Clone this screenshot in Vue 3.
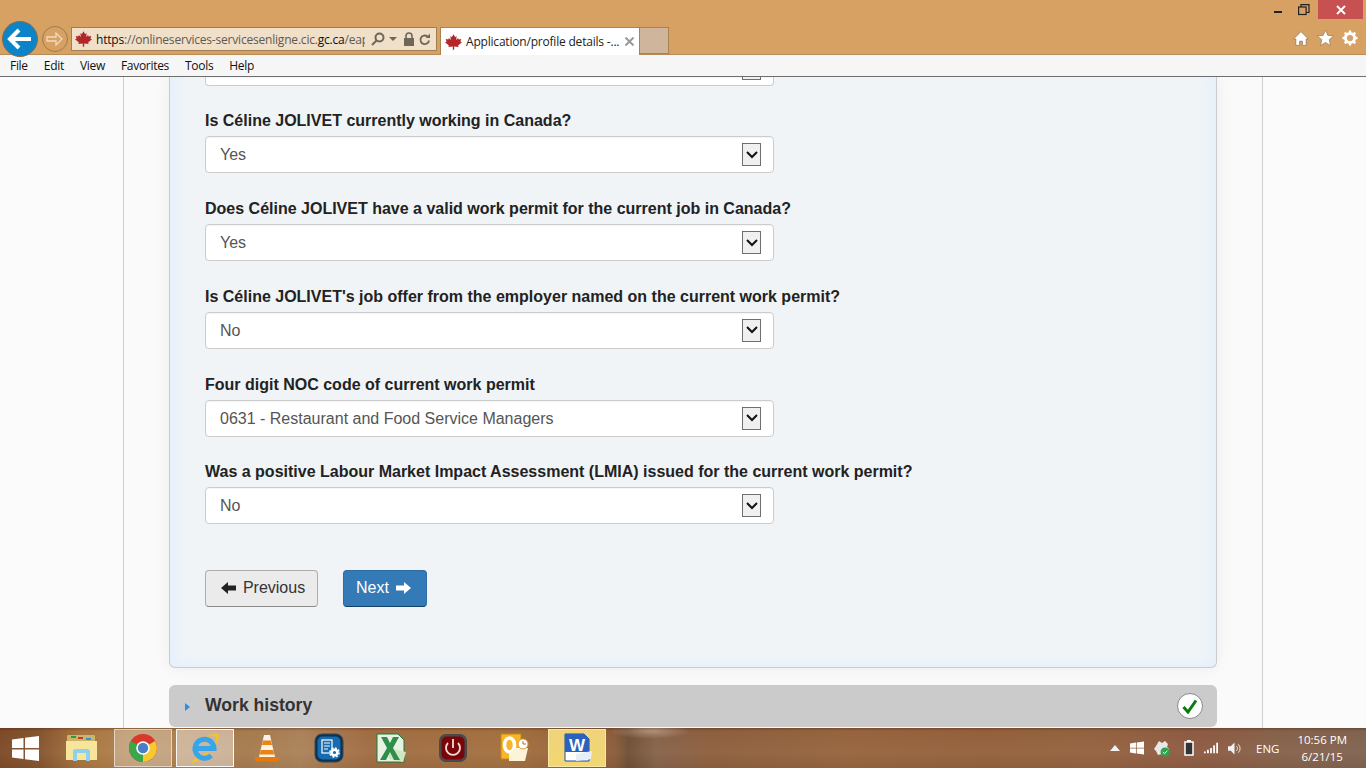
<script setup>
const menus = ['File', 'Edit', 'View', 'Favorites', 'Tools', 'Help']
const questions = [
  { label: 'Is Céline JOLIVET currently working in Canada?', value: 'Yes' },
  { label: 'Does Céline JOLIVET have a valid work permit for the current job in Canada?', value: 'Yes' },
  { label: "Is Céline JOLIVET's job offer from the employer named on the current work permit?", value: 'No' },
  { label: 'Four digit NOC code of current work permit', value: '0631 - Restaurant and Food Service Managers' },
  { label: 'Was a positive Labour Market Impact Assessment (LMIA) issued for the current work permit?', value: 'No' },
]
const leaf = 'M12 0l2.200 4 2.300-1.200-.8 5.200 2.800-2.800.8 2.100 3.700-.6-1.200 3.800L24 11.500 18.500 16l.8 2-6.300-.8V22h-2v-4.800L4.700 18l.8-2L0 11.500l2.200-1L1 6.700l3.700.6.8-2.100L8.300 8l-.8-5.200L9.800 4z'
</script>

<template>
  <div class="screen">
    <header class="chrome">
      <div class="caption">
        <svg class="cap-icon min" width="12" height="12" viewBox="0 0 12 12"><rect x="0" y="7" width="8" height="2" fill="#222"/></svg>
        <svg class="cap-icon" width="12" height="12" viewBox="0 0 12 12" fill="none" stroke="#222" stroke-width="1.2"><rect x=".6" y="3" width="7.500" height="7.500"/><path d="M3 3V.6h8v7.900H8"/></svg>
        <div class="close">
          <svg width="10" height="10" viewBox="0 0 10 10" stroke="#fff" stroke-width="2"><path d="M1 1l8 8M9 1l-8 8"/></svg>
        </div>
      </div>
      <div class="navrow">
        <div class="back">
          <svg width="28" height="24" viewBox="0 0 28 24" fill="none" stroke="#fff" stroke-width="4"><path d="M25 12H5M13 3l-9 9 9 9"/></svg>
        </div>
        <div class="forward">
          <svg width="18" height="16" viewBox="0 0 18 16" fill="none" stroke="#efdcc0" stroke-width="1.300"><path d="M1 6h9V2l6 6-6 6v-4H1z"/></svg>
        </div>
        <div class="address">
          <svg class="leaf" width="17" height="16" viewBox="0 0 24 22"><path :d="leaf" fill="#b3262a"/></svg>
          <div class="url"><span class="dark">https</span>://onlineservices-servicesenligne.cic.<span class="dark">gc.ca</span>/eap</div>
          <svg class="mag" width="14" height="14" viewBox="0 0 14 14" fill="none" stroke="#6f6558" stroke-width="2"><circle cx="8.500" cy="5.500" r="4"/><path d="M5.500 8.500L1 13"/></svg>
          <svg class="drop" width="8" height="5" viewBox="0 0 8 5"><path d="M0 0h8L4 4z" fill="#6f6558"/></svg>
          <svg class="lock" width="12" height="14" viewBox="0 0 12 14"><rect x="1" y="6" width="10" height="8" fill="#6f6558"/><path d="M3 6V4a3 3 0 016 0v2" fill="none" stroke="#6f6558" stroke-width="1.600"/></svg>
          <svg width="12" height="13" viewBox="0 0 12 13" fill="none" stroke="#6f6558" stroke-width="1.800"><path d="M10 7.500a4.300 4.300 0 11-1.500-4"/><path d="M11 .5v4.400H6.800z" fill="#6f6558" stroke="none"/></svg>
        </div>
        <div class="tab">
          <svg class="leaf" width="17" height="16" viewBox="0 0 24 22"><path :d="leaf" fill="#b3262a"/></svg>
          <span class="tab-title">Application/profile details -...</span>
          <svg width="9" height="9" viewBox="0 0 9 9" stroke="#9a9a9a" stroke-width="2"><path d="M.5.5l8 8M8.500.5l-8 8"/></svg>
        </div>
        <div class="newtab"></div>
        <div class="tools">
          <svg width="16" height="15" viewBox="0 0 16 15"><path d="M8 .6L.6 8h2.200v6.400h3.800v-4.200h2.800v4.200h3.800V8h2.200z" fill="#fff" stroke="#8a6f52" stroke-width=".7"/></svg>
          <svg width="17" height="16" viewBox="0 0 17 16"><path d="M8.500 0l2.300 5.400 5.700.5-4.300 3.800 1.300 5.800-5-3-5 3 1.300-5.800L.5 5.900l5.700-.5z" fill="#fff" stroke="#8a6f52" stroke-width=".6"/></svg>
          <svg width="16" height="16" viewBox="0 0 16 16"><circle cx="8" cy="8" r="4.600" fill="none" stroke="#fff" stroke-width="3"/><path d="M8 .5v3M8 12.500v3M.5 8h3M12.500 8h3M2.700 2.700l2.100 2.100M11.200 11.200l2.100 2.100M13.300 2.700l-2.100 2.100M4.800 11.200l-2.100 2.100" stroke="#fff" stroke-width="2.400"/></svg>
        </div>
      </div>
    </header>

    <nav class="menubar">
      <span v-for="m in menus" :key="m" class="menu-item">{{ m }}</span>
    </nav>

    <main class="viewport">
      <div class="container">
        <section class="panel">
          <div class="select cut">
            <span class="arrow"></span>
          </div>
          <div v-for="q in questions" :key="q.label" class="field">
            <label class="field-label">{{ q.label }}</label>
            <div class="select">
              <span class="value">{{ q.value }}</span>
              <span class="arrow">
                <svg width="12" height="8" viewBox="0 0 12 8" fill="none" stroke="#111" stroke-width="2"><path d="M1 1l5 5 5-5"/></svg>
              </span>
            </div>
          </div>
          <div class="actions">
            <button class="btn btn-prev">
              <svg width="15" height="12" viewBox="0 0 15 12"><path d="M0 6l7-6v3.500h8v5H7V12z" fill="#222"/></svg>
              Previous
            </button>
            <button class="btn btn-next">
              Next
              <svg width="15" height="12" viewBox="0 0 15 12"><path d="M15 6L8 0v3.500H0v5h8V12z" fill="#fff"/></svg>
            </button>
          </div>
        </section>
        <div class="accordion">
          <svg class="caret" width="5" height="8" viewBox="0 0 5 8"><path d="M0 0l5 4-5 4z" fill="#2f8de0"/></svg>
          <h2 class="acc-title">Work history</h2>
          <span class="check">
            <svg width="16" height="15" viewBox="0 0 16 15" fill="none" stroke="#0a7a12" stroke-width="3"><path d="M1.500 8l4.500 5 8-11.500"/></svg>
          </span>
        </div>
      </div>
    </main>

    <footer class="taskbar">
      <div class="tb-slot start">
        <svg width="27" height="25" viewBox="0 0 27 25" fill="#fff"><path d="M0 3.600L11.500 2v10H0zM13 1.800L27 0v12H13zM0 13.500h11.500V23L0 21.400zM13 13.500h14V25l-14-1.800z"/></svg>
      </div>
      <div class="tb-slot explorer">
        <svg width="34" height="32" viewBox="0 0 34 32"><rect x="2" y="3" width="28" height="8" rx="1" fill="#c9b66a"/><rect x="6" y="4" width="5" height="2" fill="#2b9d3a"/><rect x="13" y="5" width="5" height="2" fill="#c93b30"/><rect x="21" y="6" width="5" height="2" fill="#3a8fd6"/><path d="M1 9h31v19H1z" fill="#f7e59b"/><path d="M8 29v-9a3 3 0 013-3h11a3 3 0 013 3v9h-4v-8h-9v8z" fill="#8fd0ef"/></svg>
      </div>
      <div class="tb-slot running">
        <svg width="30" height="30" viewBox="0 0 30 30"><circle cx="15" cy="15" r="14" fill="#d8392c"/><path d="M15 15L27.100 8A14 14 0 0115 29z" fill="#f5c92f"/><path d="M15 15L15 29A14 14 0 012.900 8z" fill="#3aa748"/><circle cx="15" cy="15" r="6.800" fill="#fff"/><circle cx="15" cy="15" r="5.200" fill="#4a7fc8"/></svg>
      </div>
      <div class="tb-slot running active">
        <svg width="32" height="32" viewBox="0 0 32 32"><path d="M8 24.500C2 30 1 32 4 31c5-1.500 13-7 19-14C29 10 32 4 29 2c-2.500-1.500-8 0-13 4 6-2.500 10.500-3 11-1 .8 3-3 9-8 14-5 4.500-8 6.500-11 5.500z" fill="#f2c230"/><path d="M7 16.500h18a9.500 9.500 0 10-2.800 7" fill="none" stroke="#37a5e8" stroke-width="5"/></svg>
      </div>
      <div class="tb-slot">
        <svg width="26" height="30" viewBox="0 0 26 30"><path d="M10 2h6l2 9 3 13H5l3-13z" fill="#f7f3ec"/><path d="M9 7.500h8l1 4.500H8zM6.700 17h12.600l1 4.500H5.700z" fill="#ee8310"/><path d="M0 24h26l-2 4.500H2z" fill="#e9780a"/></svg>
      </div>
      <div class="tb-slot">
        <svg width="30" height="30" viewBox="0 0 30 30"><rect x="1" y="1" width="28" height="28" rx="7" fill="#0d3350" stroke="#394650"/><rect x="3.500" y="3.500" width="23" height="23" rx="5" fill="#176bb0"/><rect x="8" y="7" width="10" height="13" fill="none" stroke="#fff" stroke-width="1.200"/><path d="M10 10h6M10 13h6M10 16h4" stroke="#fff"/><circle cx="20.500" cy="19.500" r="2.800" fill="none" stroke="#fff" stroke-width="2.400"/><circle cx="20.500" cy="19.500" r="4.500" fill="none" stroke="#fff" stroke-width="1.600" stroke-dasharray="2 1.500"/></svg>
      </div>
      <div class="tb-slot">
        <svg width="30" height="30" viewBox="0 0 30 30"><path d="M1 1h21l6 6v22H1z" fill="#e8f2e2" stroke="#1d7a3a"/><path d="M13 15l17 4-3 10-14-3z" fill="#cfe6c5"/><path d="M5 4h6l3 6 3-6h6l-6 11 7 12h-6l-4-8-4 8H4l7-12z" fill="#2f8f4a"/></svg>
      </div>
      <div class="tb-slot">
        <svg width="30" height="30" viewBox="0 0 30 30"><rect x="1" y="1" width="28" height="28" rx="7" fill="#4a4a4a"/><rect x="3.500" y="3.500" width="23" height="23" rx="5" fill="#7a0508"/><path d="M10 10a7 7 0 1010 0" fill="none" stroke="#f3dede" stroke-width="1.800"/><path d="M15 6v9" stroke="#f3dede" stroke-width="1.800"/></svg>
      </div>
      <div class="tb-slot">
        <svg width="30" height="30" viewBox="0 0 30 30"><path d="M1 1h20v25H1z" fill="#f5b62a" stroke="#c88712"/><ellipse cx="9.500" cy="12" rx="5" ry="7" fill="none" stroke="#fff" stroke-width="3.500"/><path d="M9 21l6-6h13l-3 13H9z" fill="#fdf3d8"/><circle cx="23" cy="11" r="5" fill="#fff" stroke="#e59a2a"/><path d="M23 8v3h3" fill="none" stroke="#c46a20"/></svg>
      </div>
      <div class="tb-slot word">
        <svg width="30" height="30" viewBox="0 0 30 30"><path d="M3 1h19l5 5v22H3z" fill="#fff" stroke="#1c4f9e"/><path d="M3 1h19l5 5v13H3z" fill="#2a62bd"/><text x="15" y="18" text-anchor="middle" class="word-w">W</text><path d="M14 21l16-3-1 8-15 2z" fill="#e8eef8"/></svg>
      </div>

      <div class="tray">
        <svg width="10" height="6" viewBox="0 0 10 6"><path d="M5 0l5 6H0z" fill="#f2f2f2"/></svg>
        <svg width="14" height="14" viewBox="0 0 27 25" fill="#fff"><path d="M0 3.600L11.500 2v10H0zM13 1.800L27 0v12H13zM0 13.500h11.500V23L0 21.400zM13 13.500h14V25l-14-1.800z"/></svg>
        <svg width="16" height="17" viewBox="0 0 16 17"><path d="M5 1l3 2 3-2 3 3-1 3 2 2-3 3-1 3-3-1-4 1-2-4-2-2 2-3z" fill="#e8e8e8"/><circle cx="11" cy="12" r="4.500" fill="#2da34a"/><path d="M8.800 12l1.700 1.700 2.800-3" fill="none" stroke="#fff"/></svg>
        <svg class="battery" width="10" height="16" viewBox="0 0 10 16"><rect x="1" y="2" width="8" height="13" fill="#333" stroke="#fff" stroke-width="1.500"/><rect x="3" y="0" width="4" height="2" fill="#fff"/></svg>
        <svg width="14" height="12" viewBox="0 0 16 12" fill="#fff"><rect y="10" width="2" height="2"/><rect x="3.500" y="8" width="2" height="4"/><rect x="7" y="6" width="2" height="6"/><rect x="10.500" y="3" width="2" height="9"/><rect x="14" y="0" width="2" height="12"/></svg>
        <svg width="13" height="13" viewBox="0 0 14 13"><path d="M0 4h3l4-4v13l-4-4H0z" fill="#f2f2f2"/><path d="M9 4a3 3 0 010 5M11 2a6 6 0 010 9" fill="none" stroke="#f2f2f2"/></svg>
        <span class="lang">ENG</span>
        <div class="clock"><span>10:56 PM</span><span>6/21/15</span></div>
      </div>
    </footer>
  </div>
</template>

<style>
html, body { margin: 0; overflow: hidden; }
</style>

<style scoped>
.screen {
  width: 1366px;
  height: 768px;
  display: flex;
  flex-direction: column;
  overflow: hidden;
  font-family: "Liberation Sans", Arial, sans-serif;
}
.chrome {
  height: 55px;
  flex: none;
  background: #d6a162;
  border-bottom: 1px solid #b98c57;
  box-sizing: border-box;
  display: flex;
  flex-direction: column;
}
.caption {
  height: 19px;
  display: flex;
  justify-content: flex-end;
  align-items: flex-start;
  flex: none;
  padding-right: 3px;
}
.cap-icon { margin-top: 4px; margin-right: 8px; }
.min { margin-right: 12px; }
.close {
  width: 45px;
  height: 19px;
  background: #c75050;
  display: flex;
  align-items: center;
  justify-content: center;
}
.navrow {
  flex: 1;
  display: flex;
  align-items: flex-start;
  padding-left: 2px;
  position: relative;
}
.back {
  width: 36px;
  height: 36px;
  margin-top: 2px;
  border-radius: 50%;
  background: #0b85c8;
  border: 1px solid #8b6a44;
  box-sizing: border-box;
  display: flex;
  align-items: center;
  justify-content: center;
}
.forward {
  width: 26px;
  height: 26px;
  margin: 7px 0 0 4px;
  border-radius: 50%;
  border: 1px solid #a27a4a;
  box-sizing: border-box;
  display: flex;
  align-items: center;
  justify-content: center;
}
.address {
  width: 366px;
  height: 24px;
  margin: 8px 0 0 3px;
  background: #f0dfc9;
  border: 1px solid #a07d52;
  box-sizing: border-box;
  display: flex;
  align-items: center;
  padding: 0 5px 0 3px;
  gap: 3px;
  flex: none;
}
.leaf { flex: none; }
.url {
  width: 269px;
  margin-left: 1px;
  font-family: "Open Sans", sans-serif;
  font-size: 12px;
  color: #5f5a50;
  white-space: nowrap;
  overflow: hidden;
  flex: none;
  letter-spacing: -.2px;
}
.dark { color: #111; }
.mag { margin-left: 3px; }
.drop { margin-left: 1px; }
.lock { margin: 0 1px 0 3px; }
.tab {
  width: 200px;
  height: 28px;
  margin: 8px 0 0 3px;
  background: #fff;
  border: 1px solid #a9834f;
  border-bottom: none;
  box-sizing: border-box;
  display: flex;
  align-items: center;
  padding: 0 5px 0 4px;
  gap: 4px;
  flex: none;
}
.tab-title {
  font-family: "Open Sans", sans-serif;
  font-size: 12px;
  letter-spacing: -.2px;
  color: #222;
  white-space: nowrap;
  width: 155px;
  flex: none;
}
.newtab {
  width: 29px;
  height: 27px;
  margin-top: 8px;
  background: #ceb59b;
  border: 1px solid #a9834f;
  border-left: none;
  box-sizing: border-box;
  flex: none;
}
.tools {
  margin-left: auto;
  display: flex;
  gap: 8px;
  align-items: center;
  padding: 11px 8px 0 0;
}
.menubar {
  height: 22px;
  flex: none;
  background: #f6f6f6;
  border-bottom: 1px solid #6e6e6e;
  box-sizing: border-box;
  display: flex;
  align-items: center;
  padding-left: 10px;
  gap: 16px;
}
.menu-item {
  font-family: "Open Sans", sans-serif;
  font-size: 12px;
  letter-spacing: -.3px;
  color: #111;
}
.viewport {
  flex: 1;
  min-height: 0;
  overflow: hidden;
  background: #fbfbfb;
}
.container {
  width: 1140px;
  margin-left: 123px;
  height: 100%;
  box-sizing: border-box;
  border-left: 1px solid #cfcfcf;
  border-right: 1px solid #cfcfcf;
  padding: 0 45px;
  background: #fafafa;
}
.panel {
  width: 1048px;
  height: 591px;
  box-sizing: border-box;
  background: #f0f4f7;
  border: 1px solid #c9cdd1;
  border-top: none;
  border-radius: 0 0 6px 6px;
  box-shadow: inset 0 -14px 14px -10px #e6f0fb, inset 16px 0 14px -10px #e6f0fb, inset -16px 0 14px -10px #e6f0fb, 0 0 16px rgba(0, 0, 0, .06);
  padding: 0 35px;
}
.field { margin-top: 26.750px; }
.field-label {
  display: block;
  height: 24px;
  font-size: 16px;
  line-height: 18px;
  font-weight: 700;
  color: #222;
  white-space: nowrap;
}
.select {
  width: 569px;
  height: 37px;
  box-sizing: border-box;
  background: #fff;
  border: 1px solid #ccc;
  border-radius: 4px;
  display: flex;
  align-items: center;
  padding-left: 14px;
  padding-right: 12px;
  box-shadow: inset 0 1px 1px rgba(0, 0, 0, .04);
}
.select.cut {
  height: 8.500px;
  border-top: none;
  border-radius: 0 0 4px 4px;
  align-items: flex-start;
}
.select.cut .arrow { height: 3px; border-top: none; }
.value { font-size: 16px; color: #555; margin-top: 1px; }
.arrow {
  margin-left: auto;
  width: 19px;
  height: 23px;
  box-sizing: border-box;
  background: #f0f0f0;
  border: 1px solid #6f6f6f;
  display: flex;
  align-items: center;
  justify-content: center;
}
.actions {
  display: flex;
  gap: 25px;
  margin-top: 45.750px;
}
.btn {
  height: 37px;
  box-sizing: border-box;
  border-radius: 4px;
  font-family: "Liberation Sans", Arial, sans-serif;
  font-size: 16px;
  display: flex;
  align-items: center;
  gap: 7px;
  padding: 0 0 1px;
}
.btn-prev {
  width: 113px;
  background: #ebebeb;
  border: 1px solid #adadad;
  border-bottom-color: #8a8a8a;
  color: #333;
  justify-content: center;
  padding-left: 3px;
}
.btn-next {
  width: 84px;
  background: #337ab7;
  border: 1px solid #2e6da4;
  border-bottom-color: #123f66;
  color: #fff;
  justify-content: center;
  padding-right: 3px;
}
.accordion {
  width: 1048px;
  height: 42px;
  margin-top: 17px;
  box-sizing: border-box;
  background: #cbcbcb;
  border-radius: 6px;
  display: flex;
  align-items: center;
  padding: 0 14px 0 16px;
}
.caret { flex: none; margin-top: 1px; }
.acc-title {
  margin: 0 0 2px 15px;
  font-size: 17.600px;
  font-weight: 700;
  color: #333;
}
.check {
  margin-left: auto;
  width: 26px;
  height: 26px;
  border-radius: 50%;
  background: #fff;
  border: 1px solid #888;
  box-sizing: border-box;
  display: flex;
  align-items: center;
  justify-content: center;
}
.taskbar {
  height: 40px;
  flex: none;
  display: flex;
  align-items: center;
  background:
    radial-gradient(ellipse 40px 8px at 650px 3px, rgba(255, 235, 210, .35), rgba(255, 235, 210, 0)),
    linear-gradient(rgba(60, 30, 15, .35), rgba(60, 30, 15, 0) 3px, rgba(255, 255, 255, .04) 60%, rgba(0, 0, 0, .03)),
    linear-gradient(90deg, #7d4a27 0, #865530 3%, #a8743f 6%, #b08350 10%, #a57a4e 18%, #ab8259 22%, #a06c43 27%, #a3703f 37%, #93613a 43%, #8a5c3b 45%, #6f5036 46%, #86624a 48%, #8d5f3d 52%, #96643e 62%, #93603b 72%, #94623f 80%, #8d5a42 88%, #876149 93%, #7f6350 100%);
  color: #fff;
}
.tb-slot {
  width: 58px;
  height: 38px;
  margin-right: 4px;
  box-sizing: border-box;
  display: flex;
  align-items: center;
  justify-content: center;
  flex: none;
}
.start { width: 50px; margin-right: 3px; }
.explorer { margin-right: 3px; }
.running {
  background: rgba(255, 255, 255, .28);
  border: 1px solid rgba(255, 255, 255, .55);
}
.running.active {
  background: rgba(255, 255, 255, .42);
  border: 1.5px solid rgba(255, 255, 255, .9);
}
.word {
  background: linear-gradient(#efd37c, #f2d771);
  border: 1px solid #f6e7a8;
}
.word-w { font: 700 17px "Liberation Sans", sans-serif; fill: #fff; }
.tray {
  margin-left: auto;
  display: flex;
  align-items: center;
  gap: 10px;
  padding-right: 19px;
}
.battery { margin-left: 4px; }
.lang {
  font-family: "Open Sans", sans-serif;
  font-size: 11.500px;
  margin: 0 8px 0 5px;
}
.clock {
  display: flex;
  flex-direction: column;
  align-items: center;
  font-family: "Open Sans", sans-serif;
  font-size: 11.500px;
  line-height: 17px;
}
</style>
